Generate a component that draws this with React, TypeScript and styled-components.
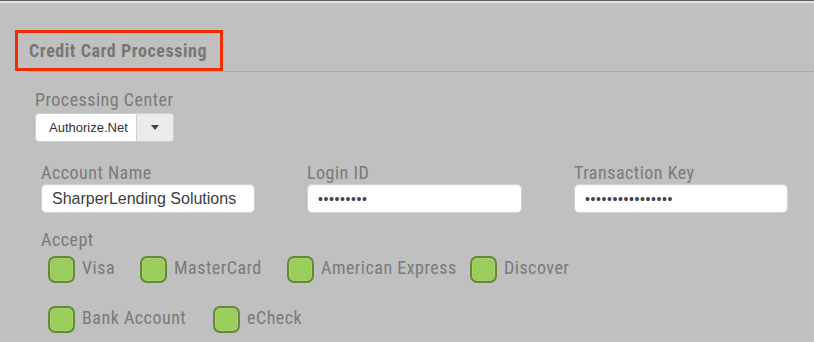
import React from "react";
import styled, { createGlobalStyle } from "styled-components";

const Global = createGlobalStyle`
  html, body { margin: 0; padding: 0; background: #c0c0c0; }
  body { width: 814px; height: 342px; overflow: hidden; }
`;

const LABEL_FONT = `"Roboto Condensed", "Liberation Sans Narrow", "Roboto", sans-serif`;

const Page = styled.div`
  width: 814px;
  height: 342px;
  background: #c0c0c0;
  border-top: 1px solid #5c5c5c;
  box-sizing: border-box;
  &::before {
    content: "";
    display: block;
    height: 2px;
    background: #e2e2e2;
  }
`;

const Header = styled.div`
  padding: 27px 0 0 15px;
  display: flex;
`;

const TitleBox = styled.div`
  border: 3px solid #f22c05;
  height: 35px;
  padding: 0 13px 0 11px;
  display: flex;
  align-items: center;
`;

const Title = styled.h2`
  margin: 0;
  font-family: ${LABEL_FONT};
  font-weight: 700;
  font-size: 18px;
  letter-spacing: 0.55px;
  color: #777777;
`;

const Rule = styled.div`
  margin: 0 0 0 29px;
  height: 1px;
  background: #a7a7a7;
`;

const Body = styled.div`
  padding: 17px 0 0 35px;
  display: flex;
  flex-direction: column;
`;

const Label = styled.div`
  font-family: ${LABEL_FONT};
  font-size: 18px;
  letter-spacing: 0.5px;
  line-height: 22px;
  color: #7a7a7a;
  height: 22px;
`;

const Select = styled.div`
  margin-top: 2px;
  width: 139px;
  height: 29px;
  box-sizing: border-box;
  border: 1px solid #cfcfcf;
  border-radius: 4px;
  background: #ffffff;
  display: flex;
  overflow: hidden;
`;

const SelectValue = styled.div`
  flex: 1;
  padding-left: 13px;
  display: flex;
  align-items: center;
  font-family: "Liberation Sans", Arial, sans-serif;
  font-size: 13px;
  color: #333333;
`;

const SelectButton = styled.div`
  width: 36px;
  border-left: 1px solid #cfcfcf;
  background: #ebebeb;
  display: flex;
  align-items: center;
  justify-content: center;
  &::after {
    content: "";
    border-left: 4px solid transparent;
    border-right: 4px solid transparent;
    border-top: 5px solid #444444;
  }
`;

const Fields = styled.div`
  margin: 20px 0 0 6px;
  display: grid;
  grid-template-columns: 214px 215px 214px;
  column-gap: 52px;
`;

const Field = styled.div`
  display: flex;
  flex-direction: column;
`;

const Input = styled.div`
  height: 29px;
  box-sizing: border-box;
  background: #ffffff;
  border: 1px solid #d2d2d2;
  border-radius: 5px;
  box-shadow: inset 0 1px 1px rgba(0, 0, 0, 0.05);
  padding-left: 10px;
  display: flex;
  align-items: center;
  font-family: "Liberation Sans", Arial, sans-serif;
  font-size: 16px;
  color: #3c3c44;
  white-space: nowrap;
`;

const Dots = styled.span`
  font-size: 14px;
  letter-spacing: 0.6px;
  color: #444450;
`;

const AcceptBlock = styled.div`
  margin: 16px 0 0 6px;
`;

const CheckRow = styled.div`
  display: flex;
  margin: 5px 0 0 7px;
  height: 27px;
  & + & {
    margin-top: 23px;
  }
`;

const CheckItem = styled.label<{ $w?: number }>`
  display: flex;
  align-items: center;
  width: ${(p) => (p.$w ? `${p.$w}px` : "auto")};
  flex: none;
`;

const Box = styled.span`
  width: 27px;
  height: 27px;
  box-sizing: border-box;
  border: 2px solid #66883a;
  border-radius: 7px;
  background: #9bcd5d;
  box-shadow: inset 0 0 0 1px rgba(255, 255, 255, 0.1);
  flex: none;
`;

const CheckText = styled.span`
  margin-left: 7px;
  font-family: ${LABEL_FONT};
  font-size: 18px;
  letter-spacing: 0.5px;
  color: #7a7a7a;
  position: relative;
  top: -2px;
`;

const row1 = [
  { label: "Visa", w: 92 },
  { label: "MasterCard", w: 147 },
  { label: "American Express", w: 183 },
  { label: "Discover" },
];
const row2 = [{ label: "Bank Account", w: 165 }, { label: "eCheck" }];

export default function App() {
  return (
    <Page>
      <Global />
      <Header>
        <TitleBox>
          <Title>Credit Card Processing</Title>
        </TitleBox>
      </Header>
      <Rule />
      <Body>
        <Label>Processing Center</Label>
        <Select>
          <SelectValue>Authorize.Net</SelectValue>
          <SelectButton />
        </Select>
        <Fields>
          <Field>
            <Label>Account Name</Label>
            <Input>SharperLending Solutions</Input>
          </Field>
          <Field>
            <Label>Login ID</Label>
            <Input>
              <Dots>•••••••••</Dots>
            </Input>
          </Field>
          <Field>
            <Label>Transaction Key</Label>
            <Input>
              <Dots>••••••••••••••••</Dots>
            </Input>
          </Field>
        </Fields>
        <AcceptBlock>
          <Label>Accept</Label>
          <CheckRow>
            {row1.map((c) => (
              <CheckItem key={c.label} $w={c.w}>
                <Box />
                <CheckText>{c.label}</CheckText>
              </CheckItem>
            ))}
          </CheckRow>
          <CheckRow>
            {row2.map((c) => (
              <CheckItem key={c.label} $w={c.w}>
                <Box />
                <CheckText>{c.label}</CheckText>
              </CheckItem>
            ))}
          </CheckRow>
        </AcceptBlock>
      </Body>
    </Page>
  );
}
